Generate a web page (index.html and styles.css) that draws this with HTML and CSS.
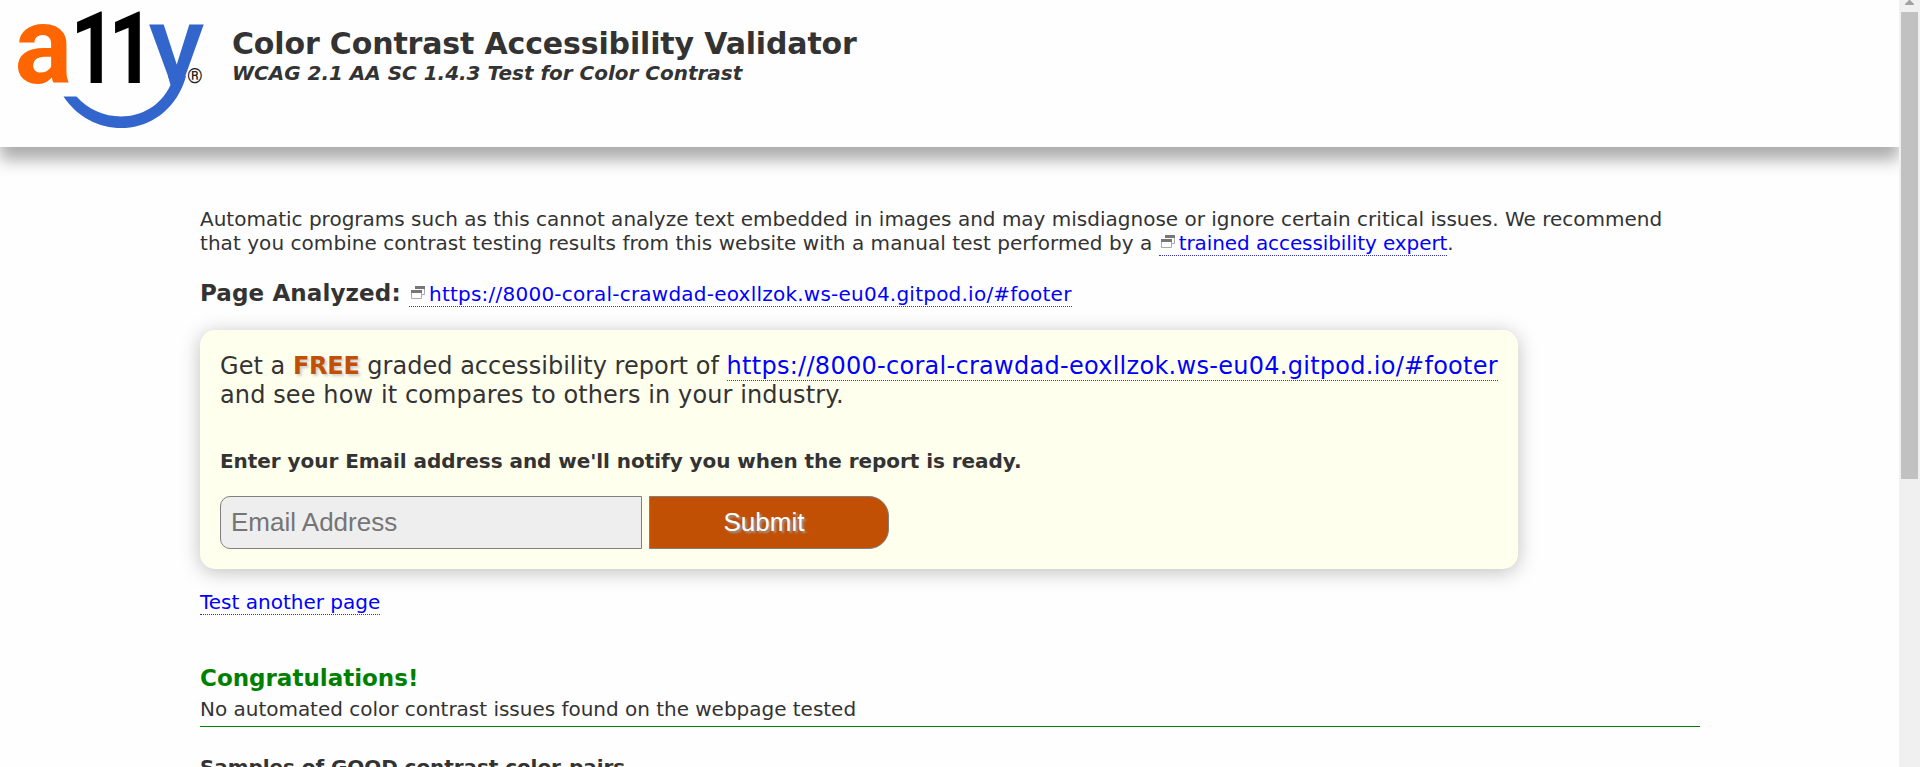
FILE: index.html
```html
<!DOCTYPE html>
<html lang="en">
<head>
<meta charset="utf-8">
<title>Color Contrast Accessibility Validator</title>
<link rel="stylesheet" href="styles.css">
</head>
<body>
<div class="page">
  <header class="header">
    <svg class="logo" width="200" height="135" viewBox="0 0 200 135" role="img" aria-label="a11y">
      <defs><clipPath id="stem"><rect x="140" y="0" width="65" height="84"/></clipPath></defs>
      <text class="logo-a" transform="translate(14.500 82.500) scale(.98 1)">a</text>
      <text class="logo-one" transform="translate(70.500 83) scale(.8 1)">1</text>
      <text class="logo-one" transform="translate(108.500 83) scale(.8 1)">1</text>
      <g clip-path="url(#stem)"><text class="logo-y" transform="translate(148.500 83) scale(1.02 1)">y</text></g>
      <path class="logo-smile" d="M63.500 96.500H76.500C101 125 152 124.500 170.500 85L168 76L186 76C185 80 184 83 182 87.500C158 140 92 140 63.500 96.500Z"/>
      <text class="logo-reg" x="187" y="83">®</text>
    </svg>
    <div class="titles">
      <h1 class="title">Color Contrast Accessibility Validator</h1>
      <p class="subtitle">WCAG 2.1 AA SC 1.4.3 Test for Color Contrast</p>
    </div>
  </header>
  <main class="main">
    <p class="intro">Automatic programs such as this cannot analyze text embedded in images and may misdiagnose or ignore certain critical issues. We recommend<br><span class="intro-second">that you combine contrast testing results from this website with a manual test performed by a </span><a class="link expert" href="#"><svg class="ext" width="14" height="13" viewBox="0 0 14 13"><path fill="#777" d="M4 0h10v3H4zM0 4h11v3H0z"/><path fill="none" stroke="#aaa" d="M13.500 3v5.500H11M.5 7v5.500h10V7"/></svg>trained accessibility expert</a>.</p>
    <div class="analyzed"><h2 class="analyzed-label">Page Analyzed:</h2><a class="link url" href="#"><svg class="ext" width="14" height="13" viewBox="0 0 14 13"><path fill="#777" d="M4 0h10v3H4zM0 4h11v3H0z"/><path fill="none" stroke="#aaa" d="M13.500 3v5.500H11M.5 7v5.500h10V7"/></svg>https://8000-coral-crawdad-eoxllzok.ws-eu04.gitpod.io/#footer</a></div>
    <section class="report">
      <p class="offer">Get a <strong class="free">FREE</strong> graded accessibility report of <a class="link offer-url" href="#">https://8000-coral-crawdad-eoxllzok.ws-eu04.gitpod.io/#footer</a><br><span class="offer-second">and see how it compares to others in your industry.</span></p>
      <p class="prompt">Enter your Email address and we'll notify you when the report is ready.</p>
      <div class="form"><input class="email" type="text" placeholder="Email Address" aria-label="Email Address"><button class="submit" type="button">Submit</button></div>
    </section>
    <p class="again"><a class="link" href="#">Test another page</a></p>
    <section class="result">
      <h2 class="congrats">Congratulations!</h2>
      <p class="none-found">No automated color contrast issues found on the webpage tested</p>
    </section>
    <h3 class="samples">Samples of GOOD contrast color-pairs</h3>
  </main>
</div>
<div class="scrollbar"><svg class="arrow" width="9" height="5" viewBox="0 0 9 5"><path fill="#a3a3a3" d="M4 0h1l4 4v1H0V4z"/></svg><div class="thumb"></div></div>
</body>
</html>
```
FILE: styles.css
```css
* { box-sizing: border-box; }
body {
  margin: 0;
  display: flex;
  height: 767px;
  overflow: hidden;
  background: #fefefe;
  color: #333;
  font: 20px/24px "DejaVu Sans", sans-serif;
}
h1, h2, h3, p { margin: 0; }
.page { width: 1899px; height: 767px; overflow: hidden; white-space: nowrap; }
.header {
  display: flex;
  height: 147px;
  background: #fefefe;
  box-shadow: 0 13px 15px rgba(0, 0, 0, .32);
}
.logo { flex: none; width: 200px; height: 135px; margin-right: 32px; overflow: visible; }
.logo text { font-family: Roboto, sans-serif; font-weight: 700; }
.logo .logo-a { font-size: 110px; fill: #f60; }
.logo .logo-one { font-size: 100px; fill: #000; }
.logo .logo-y { font-size: 112px; font-weight: 500; fill: #36c; }
.logo-smile { fill: #36c; }
.logo .logo-reg { font-size: 20px; font-weight: 500; fill: #222; }
.titles { padding-top: 26px; }
.title { font-size: 30px; line-height: 35px; letter-spacing: -.15px; }
.subtitle { font-weight: bold; font-style: italic; letter-spacing: -.02px; }
.main { width: 1500px; margin-left: 200px; padding-top: 60px; }
.link { color: #00f; text-decoration: none; border-bottom: 1px dotted #33c; }
.ext { margin: 0 4px 0 2px; vertical-align: 2px; }
.intro-second { letter-spacing: .05px; }
.expert { letter-spacing: -.09px; }
.analyzed { display: flex; align-items: baseline; height: 28px; margin-top: 24px; }
.analyzed-label { width: 209px; font-size: 23px; line-height: 28px; letter-spacing: .12px; }
.url { letter-spacing: .23px; }
.report {
  width: 1318px;
  height: 239px;
  margin-top: 23px;
  padding: 22px 20px 20px;
  border-radius: 15px;
  background: #ffe;
  box-shadow: 0 3px 20px rgba(0, 0, 0, .25);
}
.offer { font-size: 24px; line-height: 29px; letter-spacing: .03px; }
.free { color: #c25004; letter-spacing: -.25px; text-shadow: 2px 2px 3px #ccc; }
.offer-url { letter-spacing: .28px; }
.offer-second { letter-spacing: .11px; }
.prompt { margin-top: 39px; font-weight: bold; letter-spacing: -.05px; }
.form { display: flex; gap: 7px; margin-top: 23px; }
.email, .submit {
  height: 53px;
  border: 1px solid #808080;
  font: 26px "Liberation Sans", sans-serif;
}
.email { width: 422px; padding: 0 10px; border-radius: 10px 0 0 10px; background: #eee; }
.email::placeholder { color: #757575; }
.submit {
  width: 240px;
  padding: 0 10px 0 0;
  border-radius: 0 20px 20px 0;
  background: #c25004;
  color: #fff;
  text-shadow: 2px 2px 2px #999;
}
.again { margin-top: 21px; }
.result { height: 63px; margin-top: 50px; border-bottom: 1px solid #008000; }
.congrats { color: #008000; font-size: 23px; line-height: 28px; }
.none-found { margin-top: 5px; letter-spacing: -.02px; }
.samples { margin-top: 28px; font-size: 20px; letter-spacing: -.07px; }
.scrollbar {
  display: flex;
  flex-direction: column;
  width: 21px;
  height: 767px;
  padding-left: 2px;
  background: #f0f0f0;
}
.arrow { margin-left: 4px; }
.thumb { width: 17px; height: 467px; margin-top: 7px; background: #c1c1c1; }
```
